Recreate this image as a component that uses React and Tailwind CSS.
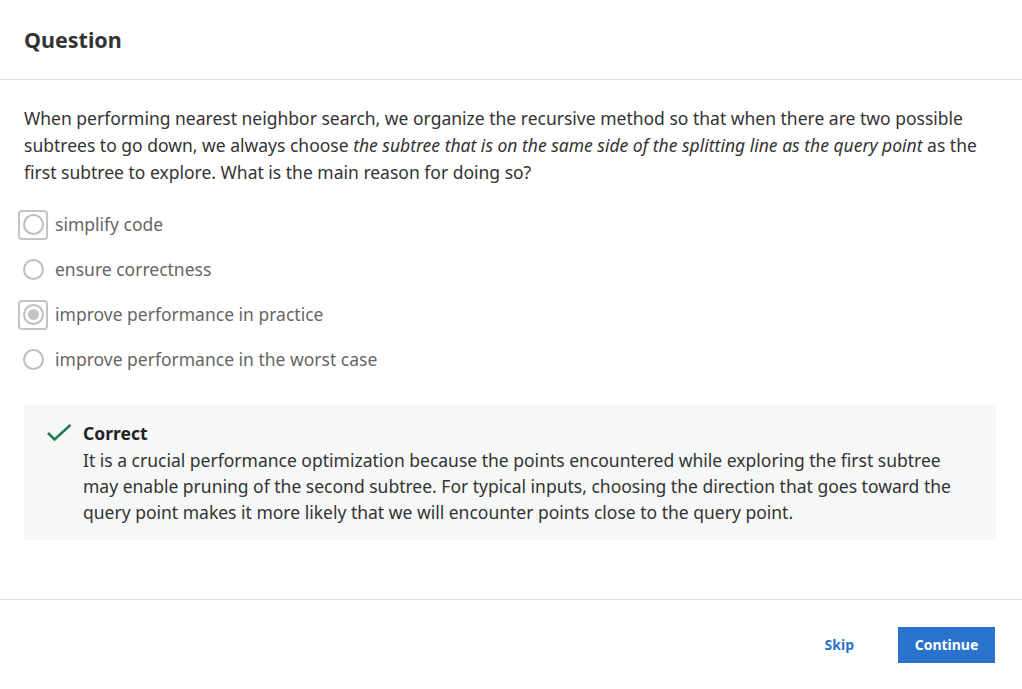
import React from 'react'

const options = [
  { label: 'simplify code', focused: true, checked: false },
  { label: 'ensure correctness', focused: false, checked: false },
  { label: 'improve performance in practice', focused: true, checked: true },
  { label: 'improve performance in the worst case', focused: false, checked: false },
]

function Radio({ focused, checked }) {
  return (
    <div
      className={
        'ml-[-6px] flex h-[30px] w-[30px] items-center justify-center rounded-[4px] border-2 ' +
        (focused ? 'border-[#c4c4c4]' : 'border-transparent')
      }
    >
      <div className="flex h-[21px] w-[21px] items-center justify-center rounded-full border-2 border-[#bdbdbd] bg-white">
        {checked && <div className="h-[11px] w-[11px] rounded-full bg-[#c2c2c2]" />}
      </div>
    </div>
  )
}

export default function App() {
  return (
    <div
      className="flex h-[689px] w-[1022px] flex-col bg-white text-[#333]"
      style={{ fontFamily: '"Noto Sans", "Open Sans", sans-serif' }}
    >
      <header className="flex h-[80px] shrink-0 items-center border-b border-[#e0e0e0] px-6">
        <h1 className="mt-[2px] text-[21.5px] font-bold text-[#333]">Question</h1>
      </header>

      <main className="flex-1 pl-6 pr-[26px] pt-[25px]">
        <p className="text-[17.5px] leading-[27px] text-[#333]">
          When performing nearest neighbor search, we organize the recursive method so that when there are two possible
          subtrees to go down, we always choose{' '}
          <em>the subtree that is on the same side of the splitting line as the query point</em> as the first subtree
          to explore. What is the main reason for doing so?
        </p>

        <div className="mt-4 flex flex-col">
          {options.map((o) => (
            <label key={o.label} className="flex h-[45px] items-center gap-[7px]">
              <Radio focused={o.focused} checked={o.checked} />
              <span className="text-[17.5px] text-[#666]">{o.label}</span>
            </label>
          ))}
        </div>

        <div className="mt-[23px] flex gap-3 bg-[#f5f8f7] pb-[15px] pl-[23px] pr-[23px] pt-4">
          <svg width="24" height="24" viewBox="0 0 24 24" className="mt-[1px] shrink-0" fill="none">
            <polyline
              points="1,11 7.5,17.5 23.5,3"
              stroke="#1f7d51"
              strokeWidth="2.6"
              strokeLinecap="butt"
              strokeLinejoin="miter"
            />
          </svg>
          <div>
            <div className="text-[17.5px] font-bold leading-[24px] text-[#222]">Correct</div>
            <p className="mt-[2px] text-[17.5px] leading-[26px] text-[#333]">
              It is a crucial performance optimization because the points encountered while exploring the first
              subtree may enable pruning of the second subtree. For typical inputs, choosing the direction that goes
              toward the query point makes it more likely that we will encounter points close to the query point.
            </p>
          </div>
        </div>
      </main>

      <footer className="flex h-[90px] shrink-0 items-center justify-end gap-[44px] border-t border-[#e0e0e0] pr-[27px]">
        <button className="text-[14px] font-bold text-[#2a73cc]">Skip</button>
        <button className="h-[36px] w-[97px] bg-[#2a73cc] text-[14px] font-bold text-white">Continue</button>
      </footer>
    </div>
  )
}
